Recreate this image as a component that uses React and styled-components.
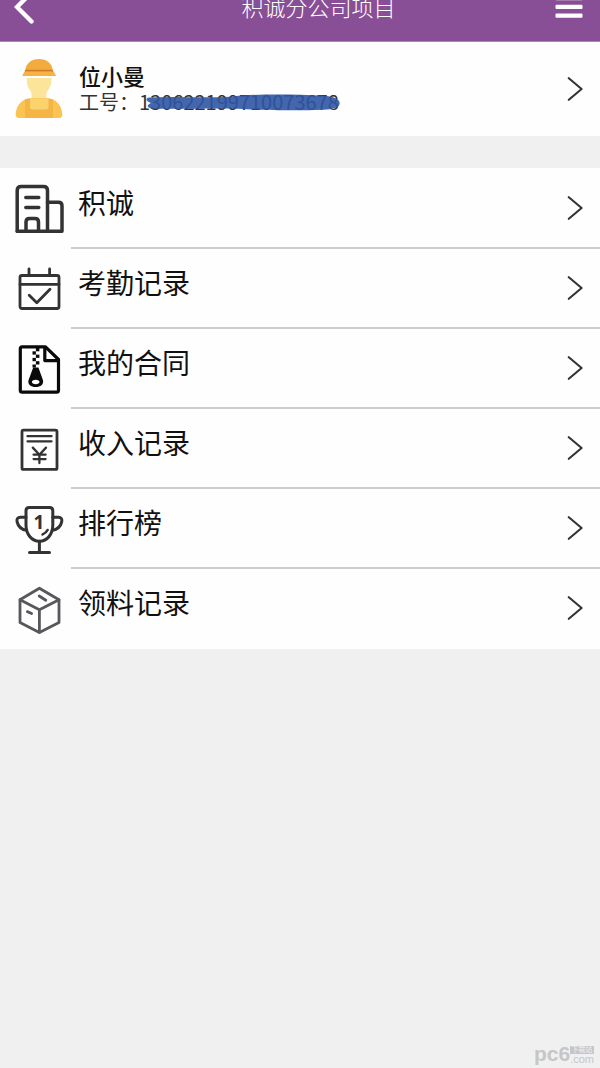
import React from "react";
import styled, { createGlobalStyle, ThemeProvider } from "styled-components";

const theme = {
  color: {
    primary: "#894f96",
    page: "#f0f0f0",
    surface: "#fefefe",
    text: "#111111",
    icon: "#333333",
    line: "#cbcbcb",
    ink: "#2f55a4",
    mark: "#c6c6c8"
  },
  font: '"Noto Sans CJK SC", "Noto Sans", sans-serif'
};

const BackIcon = () => (
  <svg width="20" height="34" viewBox="0 0 20 34" fill="none" aria-hidden="true">
    <path
      d="M17.5 2.5L3 17l14.5 14.5"
      stroke="#fff"
      strokeWidth="4.4"
      strokeLinecap="round"
      strokeLinejoin="miter"
    />
  </svg>
);

const MenuIcon = () => (
  <svg width="28" height="24" viewBox="0 0 28 24" aria-hidden="true">
    <g fill="#fff">
      <rect x="0.5" y="1" width="27" height="4.2" rx="1" />
      <rect x="0.5" y="9.8" width="27" height="4.2" rx="1" />
      <rect x="0.5" y="18.6" width="27" height="4.2" rx="1" />
    </g>
  </svg>
);

const ArrowIcon = () => (
  <svg width="16" height="24" viewBox="0 0 16 24" fill="none" aria-hidden="true">
    <path
      d="M1.8 1.2L14.6 12L1.8 22.8"
      stroke="#333"
      strokeWidth="2.1"
      strokeLinecap="round"
      strokeLinejoin="round"
    />
  </svg>
);

const WorkerIcon = () => (
  <svg width="48" height="60" viewBox="0 0 48 60" aria-hidden="true">
    <path d="M10.3 12C10.3 4.5 16.500 0 24 0s13.700 4.500 13.700 12z" fill="#f3ab3c" />
    <path d="M9.600 12h28.800l2.800 5H7.200z" fill="#f6b344" />
    <path d="M10 10.800h28v1.600H10z" fill="#cf7a2d" />
    <path
      d="M11.800 19h24.600c.3 6-1.200 9.500-3.600 12.500-1.400 1.800-1.600 3.600-1.400 7L32 50H16l.6-11.500c.2-3.400-.2-5.200-1.500-7-2.300-3-3.600-6.500-3.300-12.500z"
      fill="#fce49a"
    />
    <path d="M15 39.500c-8 0-14 7-14.300 16 0 2 1 3.500 3 3.500h40.600c2 0 3.100-1.500 3-3.500C47 46.500 41 39.500 33 39.500z" fill="#fbc452" />
    <path d="M10 40.600l4.500-1.100h19l4.500 1.100V59H10z" fill="#f5b546" />
    <path d="M15 39.500h18.500V48c0 1.500-1 2.500-2.500 2.500H17.500c-1.500 0-2.500-1-2.500-2.500z" fill="#fbd36c" />
  </svg>
);

const BuildingIcon = () => (
  <g strokeWidth="3.5">
    <path d="M2.2 46.2V5.500q0-4 4-4h22.300q4 0 4 4v40.700" />
    <path d="M32.500 17.200h11q3.500 0 3.500 3.500v25.500H2.200" />
    <path d="M11 46V37q0-3.500 3.500-3.500h5.500q3.500 0 3.500 3.500v9" />
    <path d="M10.800 12.600h13M10.800 22.600h13" />
  </g>
);

const CalendarIcon = () => (
  <g strokeWidth="2.8">
    <rect x="5" y="10.500" width="39" height="33" rx="2" />
    <path d="M5 19.400h39M14 4v6.500M34.600 4v6.500" />
    <path d="M14.200 30.200l7.600 7.600L35 24.200" />
  </g>
);

const ZipFileIcon = () => (
  <g stroke="#0a0a0a">
    <path
      d="M30.500 1.900H7.200q-1.900 0-1.900 1.900v41.400q0 1.900 1.900 1.900h34.400q1.900 0 1.900-1.900V14.500z"
      strokeWidth="3.2"
    />
    <path d="M29.800 2v13.600h13.600" strokeWidth="3.2" strokeLinecap="butt" />
    <g fill="#0a0a0a" stroke="none">
      <rect x="20.900" y="2.800" width="3.500" height="3.500" />
      <rect x="17.500" y="6.300" width="3.400" height="3.300" />
      <rect x="20.900" y="9.600" width="3.500" height="3.300" />
      <rect x="17.500" y="12.900" width="3.400" height="3.300" />
      <rect x="20.900" y="16.200" width="3.500" height="3.300" />
      <rect x="17.500" y="19.500" width="3.400" height="3" />
      <path
        fillRule="evenodd"
        d="M18.200 22.500h5.200l4.600 12.700c1 4-2.500 6.800-7.300 6.800s-8.200-2.800-7.200-6.800zM20.700 34.800c-2.400 0-3.800 1-3.800 2.200s1.400 2.200 3.800 2.200 3.800-1 3.800-2.200-1.400-2.200-3.800-2.200z"
      />
    </g>
  </g>
);

const IncomeIcon = () => (
  <g strokeWidth="2.800">
    <rect x="7" y="5.200" width="35" height="39.200" rx="1.500" />
    <path
      d="M12.500 11.200h24M12.500 16.300h24M17.800 22.600l6.600 7.100 6.600-7.100M24.400 29.700V38M18.600 29.700h12M18.600 34.100h12"
      strokeWidth="2.300"
    />
  </g>
);

const TrophyIcon = () => (
  <g strokeWidth="3">
    <path d="M11 5.800q0-3.200 3.200-3.200h20.400q3.200 0 3.200 3.200V20c0 9-5.400 16.200-13.400 16.200S11 29 11 20z" />
    <path d="M11 12.200H5.500c-3 0-4 2-3.400 4.600 1 4.600 4.500 7.600 9.500 8.600" />
    <path d="M37.800 12.200h5.500c3 0 4 2 3.400 4.600-1 4.600-4.500 7.600-9.500 8.600" />
    <path d="M24.400 36.200v11M14.500 47.400h20" />
    <path d="M32.600 25c-1 1.900-2.600 3.400-5 4.400" strokeWidth="2.600" />
    <text
      x="24"
      y="23.500"
      fill="#333"
      stroke="none"
      fontSize="19"
      fontWeight="700"
      fontFamily="Noto Sans, sans-serif"
      textAnchor="middle"
    >
      1
    </text>
  </g>
);

const BoxIcon = () => (
  <g stroke="#58585c" strokeWidth="2.800">
    <path d="M24.400 3.200L5 14.800v22.600l19.400 10 19.600-10V14.800z" />
    <path d="M5 14.800l19.400 10 19.600-10M24.400 24.800v22.600" />
    <path d="M24.200 11l6.600 4.200M12.400 26.600l4.200 1.900" />
  </g>
);

const items = [
  { id: "company", label: "积诚", Icon: BuildingIcon },
  { id: "attendance", label: "考勤记录", Icon: CalendarIcon },
  { id: "contract", label: "我的合同", Icon: ZipFileIcon },
  { id: "income", label: "收入记录", Icon: IncomeIcon },
  { id: "ranking", label: "排行榜", Icon: TrophyIcon },
  { id: "materials", label: "领料记录", Icon: BoxIcon }
];

const App = () => (
  <ThemeProvider theme={theme}>
    <GlobalStyle />
    <Page>
      <Header>
        <HeaderBar>
          <BackButton type="button" aria-label="返回">
            <BackIcon />
          </BackButton>
          <Title>积诚分公司项目</Title>
          <MenuButton type="button" aria-label="菜单">
            <MenuIcon />
          </MenuButton>
        </HeaderBar>
      </Header>
      <Profile href="#profile">
        <WorkerIcon />
        <ProfileInfo>
          <ProfileName>位小曼</ProfileName>
          <ProfileId>
            工号：
            <Redacted>
              130622199710073678
              <Scribble viewBox="0 0 200 20" preserveAspectRatio="none" aria-hidden="true">
                <path d="M10 4C35 2 60 5 92 3C110 0 150 0 186 2C198 3 203 8 200 13C197 18 180 18 150 18C115 18 105 16 80 16C50 16 30 17 13 16C7 15 8 12 12 10C7 8 6 5 10 4z" />
              </Scribble>
            </Redacted>
          </ProfileId>
        </ProfileInfo>
        <ArrowIcon />
      </Profile>
      <List>
        {items.map(({ id, label, Icon }) => (
          <Item key={id}>
            <ItemLink href={`#${id}`}>
              <ItemIcon viewBox="0 0 48 48" aria-hidden="true">
                <Icon />
              </ItemIcon>
              <ItemBody>
                <ItemLabel>{label}</ItemLabel>
                <ArrowIcon />
              </ItemBody>
            </ItemLink>
          </Item>
        ))}
      </List>
      <Watermark>
        <MarkName>pc6</MarkName>
        <MarkSide>
          <MarkTag>下载站</MarkTag>
          <span>.com</span>
        </MarkSide>
      </Watermark>
    </Page>
  </ThemeProvider>
);

export default App;

const GlobalStyle = createGlobalStyle`
  * {
    box-sizing: border-box;
  }

  body {
    margin: 0;
    background: ${props => props.theme.color.page};
    color: ${props => props.theme.color.text};
    font-family: ${props => props.theme.font};
  }

  svg {
    display: block;
    flex-shrink: 0;
  }
`;

const Page = styled.div`
  position: relative;
  min-height: 100vh;
`;

/* only the lower part of the bar stays in view */
const Header = styled.header`
  display: flex;
  align-items: flex-end;
  height: 42px;
  overflow: hidden;
  background: ${props => props.theme.color.primary};
  border-bottom: 1px solid #a58bab;
`;

const HeaderBar = styled.div`
  display: flex;
  flex: 1;
  align-items: center;
  height: 68px;
  padding: 0 17px 0 14px;
`;

const IconButton = styled.button`
  display: flex;
  align-items: center;
  padding: 0;
  border: none;
  background: none;
  cursor: pointer;
`;

const BackButton = styled(IconButton)`
  width: 68px;
  height: 48px;
`;

const MenuButton = styled(IconButton)`
  height: 48px;
`;

const Title = styled.h1`
  flex: 1;
  margin: 0;
  padding-bottom: 3px;
  color: white;
  font-size: 22px;
  font-weight: 300;
  line-height: 32px;
  text-align: center;
`;

const Profile = styled.a`
  display: flex;
  align-items: center;
  gap: 16px;
  height: 94px;
  margin-bottom: 32px;
  padding: 0 17px 0 15px;
  background: ${props => props.theme.color.surface};
  color: inherit;
  text-decoration: none;
`;

const ProfileInfo = styled.div`
  flex: 1;
`;

const ProfileName = styled.div`
  font-size: 22px;
  font-weight: 500;
  line-height: 26px;
`;

const ProfileId = styled.div`
  color: #333;
  font-size: 20px;
  line-height: 28px;
  white-space: nowrap;
`;

const Redacted = styled.span`
  position: relative;
  display: inline-block;
`;

const Scribble = styled.svg`
  position: absolute;
  top: 6px;
  left: 0;
  width: 100%;
  height: 18px;
  overflow: visible;
  fill: ${props => props.theme.color.ink};
  fill-opacity: 0.9;
`;

const List = styled.ul`
  margin: 0;
  padding: 1px 0 0;
  list-style: none;
  background: ${props => props.theme.color.surface};
`;

const ItemBody = styled.div`
  display: flex;
  flex: 1;
  align-items: center;
  justify-content: space-between;
  padding: 0 17px 0 7px;
  border-bottom: 2px solid ${props => props.theme.color.line};
`;

const Item = styled.li`
  &:last-child ${ItemBody} {
    border-bottom-color: transparent;
  }
`;

const ItemLink = styled.a`
  display: flex;
  height: 80px;
  padding-left: 15px;
  color: inherit;
  text-decoration: none;
`;

const ItemIcon = styled.svg`
  align-self: center;
  width: 48px;
  height: 48px;
  margin-right: 8px;
  overflow: visible;
  fill: none;
  stroke: ${props => props.theme.color.icon};
  stroke-linecap: round;
  stroke-linejoin: round;
`;

const ItemLabel = styled.span`
  padding-bottom: 12px;
  font-size: 28px;
  line-height: 40px;
`;

const Watermark = styled.div`
  position: absolute;
  right: 6px;
  bottom: 4px;
  display: flex;
  align-items: flex-end;
  color: ${props => props.theme.color.mark};
  font-family: "Liberation Sans", "Noto Sans CJK SC", sans-serif;
  font-size: 11px;
  line-height: 10px;
`;

const MarkName = styled.span`
  font-size: 21px;
  font-weight: 700;
  line-height: 20px;
`;

const MarkSide = styled.span`
  display: flex;
  flex-direction: column;
`;

const MarkTag = styled.span`
  background: ${props => props.theme.color.mark};
  color: ${props => props.theme.color.page};
  font-size: 7px;
  line-height: 8px;
  text-align: center;
`;
